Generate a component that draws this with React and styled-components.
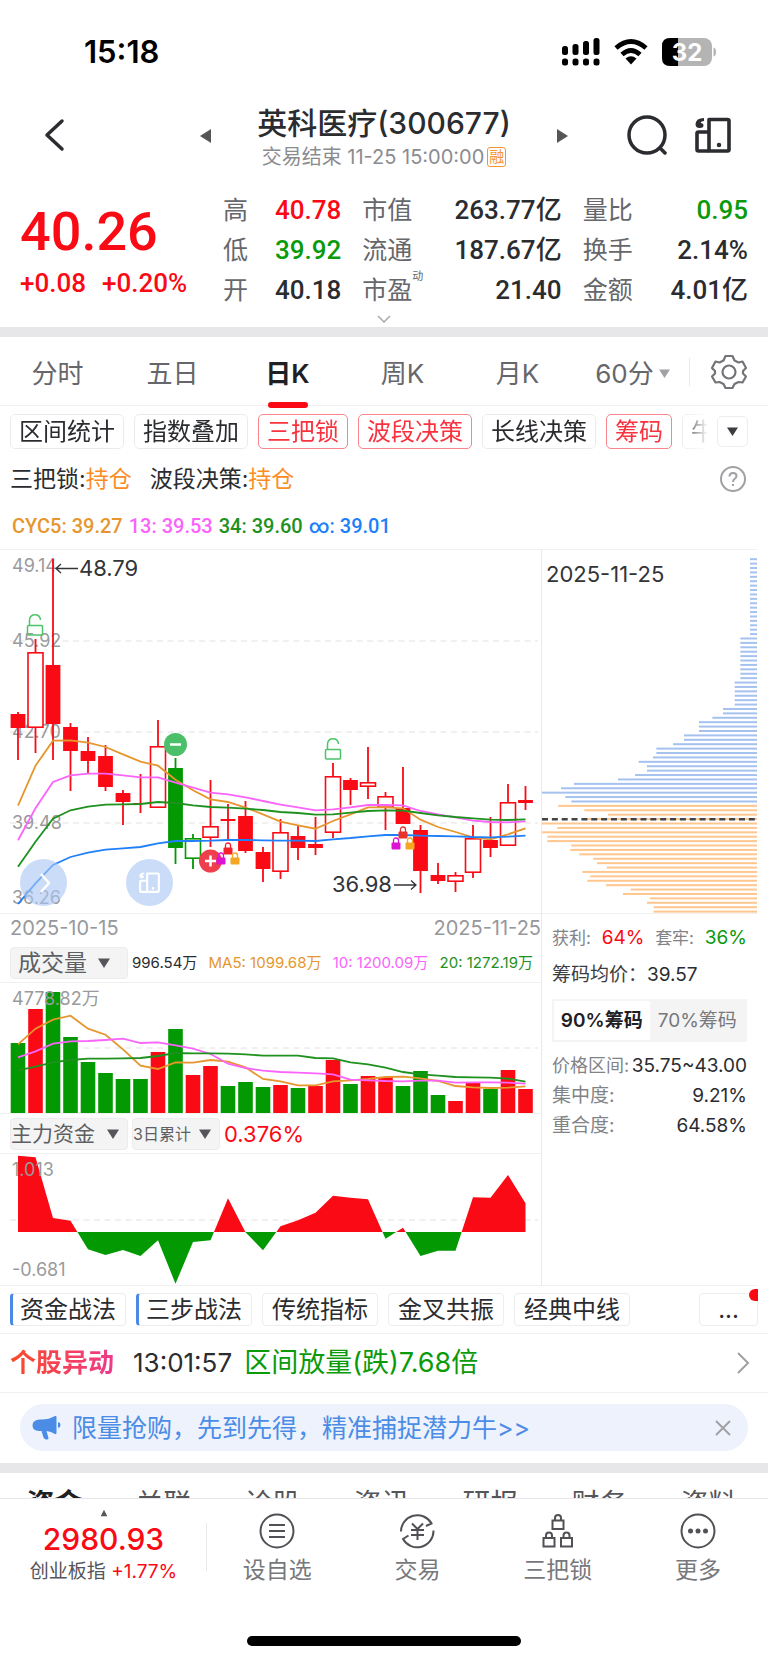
import { useState } from "react";
import styled, { createGlobalStyle, css } from "styled-components";

const RED = "#fa0a14";
const GREEN = "#0a9a0a";
const CANDLE_GREEN = "#029902";
const ORANGE = "#e6962e";
const PINK = "#fa64fa";
const MA_GREEN = "#1e911e";
const BLUE = "#2080fa";
const LINE = "#f0f0f1";

const GlobalStyle = createGlobalStyle`
    * {
        box-sizing: border-box;
    }
    body {
        margin: 0;
        background-color: #fff;
        color: #2b2c30;
        font-family: Inter, "Noto Sans CJK SC", sans-serif;
        font-size: 24px;
        line-height: 32px;
    }
    button, select {
        margin: 0;
        padding: 0;
        border: 0;
        background: none;
        color: inherit;
        font: inherit;
        cursor: pointer;
    }
    a {
        color: inherit;
        text-decoration: none;
    }
    svg {
        display: block;
        flex-shrink: 0;
    }
    dl, dd, dt, p, h1 {
        margin: 0;
        font-weight: 400;
    }
`

const Page = styled.div`
    width: 100%;
    overflow: hidden;
`

const digits = css`
    font-family: Roboto, "Noto Sans CJK SC", sans-serif;
    font-weight: 500;
`

/* ---------- header ---------- */

const StatusBar = styled.div`
    display: flex;
    align-items: center;
    justify-content: space-between;
    height: 100px;
    padding: 3px 52px 0 84px;
`

const Clock = styled.span`
    font-size: 31px;
    font-weight: 600;
    color: #000;
`

const StatusIcons = styled.div`
    display: flex;
    align-items: center;
    column-gap: 14px;
`

const NavBar = styled.header`
    display: grid;
    grid-template-columns: 200px 1fr 200px;
    align-items: center;
    height: 68px;
`

const NavSide = styled.div`
    display: flex;
    align-items: center;
    justify-content: ${({ $end }) => ($end ? "flex-end" : "flex-start")};
    column-gap: 28px;
    padding: ${({ $end }) => ($end ? "0 37px 2px 0" : "0 0 2px 44px")};
`

const NavCenter = styled.div`
    display: flex;
    align-items: center;
    justify-content: space-between;
`

const TitleBlock = styled.div`
    padding-top: 4px;
    text-align: center;
`

const Title = styled.h1`
    font-size: 30px;
    font-weight: 500;
    line-height: 38px;
`

const Subtitle = styled.p`
    display: flex;
    align-items: center;
    justify-content: center;
    column-gap: 3px;
    font-size: 20px;
    line-height: 30px;
    color: #8b8c90;
`

const Badge = styled.span`
    padding: 0 1px;
    border: 1px solid #f5952f;
    border-radius: 3px;
    font-size: 15px;
    line-height: 18px;
    color: #f5952f;
`

const Quote = styled.section`
    display: grid;
    grid-template-columns: 203px 1fr;
    padding: 22px 20px 0;
`

const Price = styled.p`
    ${digits}
    padding-top: 14px;
    font-size: 54px;
    line-height: 56px;
    color: ${RED};
`

const Change = styled.p`
    ${digits}
    display: flex;
    column-gap: 16px;
    padding-top: 7px;
    font-size: 26px;
    color: ${RED};
`

const QuoteGrid = styled.dl`
    display: grid;
    grid-template-columns: 118fr 199fr 165fr;
    column-gap: 21px;
`

const QuoteItem = styled.div`
    display: flex;
    justify-content: space-between;
    line-height: 40px;

    dt {
        color: #66676b;
        font-size: 25px;
    }
    dt sup {
        display: inline-block;
        height: 24px;
        font-size: 11px;
        line-height: 12px;
        vertical-align: top;
    }
    dd {
        ${digits}
        font-size: 26px;
        color: ${({ $color }) => $color || "inherit"};
    }
`

const ExpandButton = styled.button`
    display: flex;
    justify-content: center;
    align-items: center;
    width: 100%;
    height: 17px;
`

const Band = styled.div`
    height: 10px;
    background-color: #e7e7e9;
`

/* ---------- chart controls ---------- */

const Tabs = styled.nav`
    display: flex;
    align-items: center;
    height: 69px;
    padding-right: 78px;
    border-bottom: 1px solid ${LINE};
    position: relative;
`

const Tab = styled.button`
    position: relative;
    display: flex;
    align-items: center;
    justify-content: center;
    flex: 1;
    column-gap: 5px;
    height: 68px;
    padding-top: 5px;
    font-size: 26px;
    font-weight: ${({ $active }) => ($active ? 600 : 400)};
    color: ${({ $active }) => ($active ? "#1f2024" : "#66676b")};

    &::after {
        content: "";
        display: ${({ $active }) => ($active ? "block" : "none")};
        position: absolute;
        bottom: -3px;
        width: 40px;
        height: 6px;
        border-radius: 3px;
        background-color: ${RED};
    }
`

const SettingsButton = styled.button`
    position: absolute;
    right: 0;
    display: flex;
    align-items: center;
    justify-content: center;
    width: 79px;
    height: 28px;
    margin-top: 2px;
    border-left: 1px solid #e8e8ea;
`

const ChipRow = styled.div`
    display: flex;
    align-items: center;
    padding: 8px 20px 0 10px;
`

const ChipScroller = styled.div`
    display: flex;
    flex: 1;
    min-width: 0;
    column-gap: 10px;
    overflow: hidden;
    -webkit-mask-image: linear-gradient(to right, #000 96%, transparent 100%);
    mask-image: linear-gradient(to right, #000 96%, transparent 100%);
`

const Chip = styled.button`
    flex-shrink: 0;
    height: 35px;
    padding: 0 8px;
    border: 1px solid ${({ $on }) => ($on ? "#f9848c" : "#ebebed")};
    border-radius: 5px;
    font-size: 24px;
    line-height: 32px;
    color: ${({ $on }) => ($on ? "#f8333f" : "inherit")};
`

const ChipMore = styled.button`
    display: flex;
    align-items: center;
    justify-content: center;
    width: 31px;
    height: 31px;
    margin-left: 9px;
    border: 1px solid #ededef;
    border-radius: 5px;
`

const SignalRow = styled.div`
    display: flex;
    align-items: center;
    justify-content: space-between;
    height: 60px;
    padding: 0 22px 0 10px;
`

const Signals = styled.p`
    display: flex;
    column-gap: 18px;
    font-size: 23px;

    em {
        font-style: normal;
        color: #fb8c23;
    }
`

const CycRow = styled.p`
    ${digits}
    display: flex;
    align-items: center;
    column-gap: 6px;
    height: 40px;
    padding: 0 12px 6px;
    font-size: 20px;
`

const Colored = styled.span`
    color: ${({ $color }) => $color};
`

/* ---------- charts ---------- */

const ChartArea = styled.main`
    display: grid;
    grid-template-columns: minmax(0, 541fr) minmax(0, 216fr);
    margin-right: 11px;
    border-top: 1px solid ${LINE};
    border-bottom: 1px solid ${LINE};
`

const Charts = styled.div`
    min-width: 0;
`

const Side = styled.aside`
    border-left: 1px solid #e9e9eb;
`

const Plot = styled.svg`
    width: 100%;
    height: auto;
    border-bottom: ${({ $line }) => ($line ? `1px solid ${LINE}` : "0")};
`

const PlotText = styled.text`
    font-size: ${({ $big }) => ($big ? "22px" : "18px")};
    fill: ${({ $big }) => ($big ? "#333438" : "#9a9a9c")};
`

const CandleBox = styled.div`
    position: relative;
`

const Floating = styled.button`
    position: absolute;
    left: ${({ $left }) => $left};
    bottom: 8px;
    display: flex;
    align-items: center;
    justify-content: center;
    width: 47px;
    height: 47px;
    border-radius: 50%;
    background-color: rgba(170, 198, 243, 0.62);
`

const DateRow = styled.div`
    display: flex;
    justify-content: space-between;
    height: 29px;
    padding-left: 10px;
    font-size: 20px;
    line-height: 28px;
    color: #97989b;
`

const PanelHead = styled.div`
    display: flex;
    align-items: center;
    height: 40px;
    padding-left: 10px;
    border-bottom: 1px solid ${LINE};
`

const Picker = styled.div`
    position: relative;
    display: flex;
    align-items: center;
    width: ${({ $small }) => ($small ? "88px" : "118px")};
    height: 32px;
    margin-right: 4px;
    border: 1px solid #ececee;
    border-radius: 4px;
    background-color: #f4f4f5;

    select {
        appearance: none;
        width: 100%;
        height: 30px;
        padding-left: ${({ $indent }) => ($indent ? "7px" : "0")};
        font-size: ${({ $small, $indent }) => ($small ? "16px" : $indent ? "23px" : "21px")};
        line-height: 30px;
        color: #5e5f63;
        outline: none;
    }
    svg {
        position: absolute;
        right: ${({ $indent }) => ($indent ? "17px" : "8px")};
        pointer-events: none;
    }
`

const VolumeLegend = styled.p`
    display: flex;
    flex: 1;
    justify-content: space-between;
    padding-right: 8px;
    font-size: 15px;
    white-space: nowrap;
`

const FundValue = styled.span`
    font-size: 22px;
    color: ${RED};
`

const SideBody = styled.div`
    padding: 9px 10px 0;
`

const StatRow = styled.div`
    display: flex;
    align-items: center;
    justify-content: ${({ $start }) => ($start ? "flex-start" : "space-between")};
    height: ${({ $tall }) => ($tall ? "44px" : "30px")};
    font-size: 19px;
    white-space: nowrap;
`

const StatLabel = styled.span`
    font-size: ${({ $size }) => $size || 19}px;
    color: ${({ $dark }) => ($dark ? "#3c3d41" : "#828387")};
`

const Toggle = styled.div`
    display: flex;
    height: 43px;
    margin: 2px 0 9px;
    padding: 2px;
    background-color: #f4f4f5;
`

const ToggleItem = styled.button`
    flex: 1;
    background-color: ${({ $active }) => ($active ? "#fff" : "transparent")};
    font-size: 19px;
    font-weight: ${({ $active }) => ($active ? 600 : 400)};
    color: ${({ $active }) => ($active ? "#1f2024" : "#77787c")};
    white-space: nowrap;
`

/* ---------- below the charts ---------- */

const TacticRow = styled.div`
    display: flex;
    column-gap: 10px;
    height: 48px;
    padding: 7px 10px 0;
    border-bottom: 1px solid ${LINE};
`

const Tactic = styled.button`
    height: 33px;
    padding: 0 9px;
    border: 1px solid #ededef;
    border-left: ${({ $marked }) => ($marked ? "3px solid #4a8ae4" : "1px solid #ededef")};
    padding-left: ${({ $marked }) => ($marked ? "7px" : "9px")};
    border-radius: 4px;
    font-size: 24px;
    line-height: 30px;
`

const TacticMore = styled.button`
    position: relative;
    width: 59px;
    height: 33px;
    margin-left: auto;
    border: 1px solid #ededef;
    border-radius: 4px;
    overflow: visible;

    &::after {
        content: "";
        position: absolute;
        top: -5px;
        right: -1px;
        width: 9px;
        height: 12px;
        border-radius: 6px 0 0 6px;
        background-color: ${RED};
    }
`

const Alert = styled.a`
    display: flex;
    align-items: center;
    height: 59px;
    padding: 0 18px 0 10px;
    border-bottom: 1px solid ${LINE};
    font-size: 26px;

    svg {
        margin-left: auto;
    }
`

const AlertTag = styled.strong`
    margin-right: 19px;
    background-image: linear-gradient(to right, #fb4a26, #ee3a8c);
    background-clip: text;
    -webkit-background-clip: text;
    color: transparent;
    font-weight: 700;
`

const AlertText = styled.span`
    margin-left: 12px;
    font-size: 27px;
    color: ${GREEN};
`

const Banner = styled.div`
    display: flex;
    align-items: center;
    height: 47px;
    margin: 11px 20px 12px;
    padding: 0 17px 0 12px;
    border-radius: 24px;
    background-color: #edf2fc;
    font-size: 25px;
    color: #4a8ce6;

    a {
        flex: 1;
        margin-left: 11px;
    }
`

const CutTabs = styled.nav`
    display: flex;
    height: 25px;
    padding: 11px 5px 0 0;
    overflow: hidden;
`

const CutTab = styled.button`
    display: flex;
    flex: 1;
    justify-content: center;
    height: 40px;
    font-size: 28px;
    line-height: 40px;
    font-weight: ${({ $active }) => ($active ? 700 : 400)};
    color: ${({ $active }) => ($active ? "#1f2024" : "#55565a")};
`

const BottomBar = styled.footer`
    display: flex;
    height: 138px;
    border-top: 1px solid #e6e6e8;
`

const IndexBox = styled.div`
    position: relative;
    width: 207px;
    padding-top: 10px;
    text-align: center;

    svg {
        margin: 0 auto;
    }
    &::after {
        content: "";
        position: absolute;
        top: 24px;
        right: 0;
        height: 48px;
        border-right: 1px solid #e8e8ea;
    }
`

const IndexValue = styled.p`
    margin-top: 2px;
    font-size: 30px;
    font-weight: 500;
    line-height: 40px;
    color: ${RED};
`

const IndexName = styled.p`
    font-size: 19px;
    line-height: 26px;
    color: #55565a;
`

const BottomItem = styled.button`
    display: flex;
    flex: 1;
    flex-direction: column;
    align-items: center;
    height: 90px;
    padding-top: 14px;
    color: #77787c;
    font-size: 23px;
    row-gap: 5px;
`

const HomeIndicator = styled.div`
    width: 274px;
    height: 10px;
    margin: 0 auto 17px;
    border-radius: 5px;
    background-color: #000;
`

/* ---------- data ---------- */

const QUOTES = [
    ["高", "40.78", RED], ["市值", "263.77亿"], ["量比", "0.95", GREEN],
    ["低", "39.92", GREEN], ["流通", "187.67亿"], ["换手", "2.14%"],
    ["开", "40.18"], ["市盈", "21.40", null, "动"], ["金额", "4.01亿"],
]

const PERIODS = ["分时", "五日", "日K", "周K", "月K", "60分"]

const CHIPS = [
    ["区间统计"], ["指数叠加"], ["三把锁", true], ["波段决策", true],
    ["长线决策"], ["筹码", true], ["牛"],
]

// kind (f = filled, h = hollow, g = green), body top, body bottom, high, low
const CANDLES = [
    ["f", 164, 178, 162, 210], ["h", 102, 178, 89, 203], ["f", 115, 174, 9, 210],
    ["f", 177, 201, 173, 241], ["f", 201, 211, 187, 223], ["f", 206, 237, 195, 241],
    ["f", 243, 252, 240, 275], ["f", 253, 254, 224, 263], ["h", 196, 258, 170, 258],
    ["g", 218, 298, 208, 314], ["gh", 288, 309, 284, 319], ["h", 276, 288, 230, 297],
    ["f", 269, 271, 254, 289], ["f", 266, 301, 251, 303], ["f", 302, 319, 297, 332],
    ["h", 282, 322, 269, 329], ["f", 286, 298, 276, 310], ["f", 294, 298, 267, 305],
    ["h", 226, 283, 213, 288], ["f", 230, 240, 228, 255], ["h", 232, 237, 197, 249],
    ["h", 246, 258, 242, 280], ["f", 258, 274, 217, 274], ["f", 280, 321, 275, 343],
    ["f", 325, 331, 313, 334], ["h", 325, 332, 322, 342], ["h", 288, 323, 275, 328],
    ["f", 290, 298, 267, 307], ["h", 252, 296, 234, 296], ["f", 250, 253, 236, 260],
]

const CYC_LINES = [
    [ORANGE, [782, 662, 587, 586, 593, 606, 628, 650, 662, 704, 736, 763, 771, 788, 808, 830, 841, 851, 828, 808, 787, 787, 790, 824, 846, 861, 877, 883, 868, 850]],
    [PINK, [886, 790, 711, 691, 686, 686, 691, 697, 697, 713, 728, 743, 748, 757, 768, 779, 787, 796, 793, 787, 780, 780, 781, 798, 808, 817, 827, 831, 832, 829]],
    [MA_GREEN, [965, 890, 821, 796, 785, 779, 778, 777, 771, 774, 781, 786, 788, 791, 795, 801, 804, 809, 808, 803, 798, 796, 797, 804, 811, 816, 820, 824, 825, 823]],
    [BLUE, [1077, 1015, 960, 936, 923, 914, 910, 906, 895, 888, 888, 887, 885, 885, 886, 887, 887, 888, 883, 879, 874, 870, 870, 872, 873, 874, 876, 877, 875, 872]],
]

const VOLUMES = [
    400, -297, 247, 381, 457, 488, 506, 507, -426, 357, -495, -469, 527, 515, 531,
    -525, 534, -528, -449, 523, -497, -502, 527, 482, 556, -574, -517, 537, -479, -537,
]

const VOLUME_LINES = [
    [ORANGE, [403, 356, 329, 317, 356, 374, 418, 467, 477, 457, 458, 450, 455, 472, 507, 514, 526, 526, 514, 511, 507, 501, 500, 505, 513, 528, 532, 534, 533, 529]],
    [PINK, [442, 424, 401, 394, 393, 390, 386, 399, 397, 406, 416, 432, 461, 474, 482, 486, 488, 490, 493, 509, 511, 513, 514, 512, 512, 518, 517, 517, 518, 521]],
    [MA_GREEN, [481, 470, 457, 450, 446, 446, 445, 444, 438, 429, 430, 430, 431, 433, 437, 437, 437, 444, 445, 457, 463, 473, 486, 493, 497, 501, 502, 503, 506, 515]],
]

const FUNDS = [
    737, 742, 924, 932, 1018, 1035, 1020, 1038, 991, 1121, 996, 991, 865, 967, 1021,
    949, 931, 908, 857, 863, 868, 986, 953, 1038, 1022, 1022, 862, 863, 795, 880,
]

// [rows, left edge], from the top price down
const CHIP_ROWS = [
    [18, 660], [10, 631], [6, 614], [2, 579], [1, 547], [3, 507], [2, 462], [1, 429],
    [2, 379], [1, 369], [1, 326], [2, 351], [1, 315], [1, 264], [1, 132], [1, 93],
    [1, 36], [1, 106], [1, 124], [1, 85], [1, 163], [1, 234], [1, 158], [1, 36],
    [1, 82], [1, 36], [2, 52], [1, 124], [1, 121], [1, 148], [1, 190], [1, 201],
    [1, 230], [1, 157], [1, 181], [1, 172], [1, 228], [1, 302], [1, 279], [1, 360],
    [1, 351], [2, 371],
].flatMap(([rows, left]) => Array(rows).fill(left))

const FIRST_ORANGE_ROW = 56

const cx = (i) => 18 + i * 17.5
const toPoints = (values, offset) =>
    values.map((v, i) => `${cx(i)},${(v / 3 - offset).toFixed(1)}`).join(" ")

/* ---------- small drawings ---------- */

function Caret({ size = 12, color = "#55565a", up = false }) {
    return (
        <svg width={size} height={size} viewBox="0 0 12 12" aria-hidden="true">
            <path d={up ? "M6 1 11 11H1Z" : "M0 1.500H12L6 11Z"} fill={color} />
        </svg>
    )
}

function BoardIcon({ size, color, stroke = 3.6 }) {
    return (
        <svg width={size} height={size} viewBox="0 0 36 36" fill="none" stroke={color} strokeWidth={stroke} strokeLinejoin="round" aria-hidden="true">
            <path d="M14 2.500H32.500Q34 2.500 34 4V32.500Q34 34 32.500 34H14Z" />
            <path d="M14 15H3.500Q2 15 2 16.500V32.500Q2 34 3.500 34H14" />
            <path d="M0.500 7Q1 1 9 1V4Q6 4 5.500 6Q8.500 6 8.500 8.500Q8.500 11 4.500 11Q0.500 11 0.500 7Z" fill={color} stroke="none" />
            <circle cx="24" cy="28" r="1" strokeWidth="2.500" />
        </svg>
    )
}

function OpenLock({ x, y }) {
    return (
        <g transform={`translate(${x - 8} ${y})`} fill="none" stroke="#4cc468" strokeWidth="1.500">
            <rect x="0.500" y="11.500" width="15" height="9.500" rx="1" />
            <path d="M2.500 11.500V6Q3 0.800 8 0.800Q13 0.800 13.500 6" />
        </g>
    )
}

function SmallLock({ x, y, color }) {
    return (
        <g transform={`translate(${x - 4.5} ${y})`}>
            <rect y="5.500" width="9" height="7" rx="1" fill={color} />
            <path d="M2 6V3.500Q2 1 4.500 1Q7 1 7 3.500V6" fill="none" stroke={color} strokeWidth="1.300" />
        </g>
    )
}

function StatusGlyphs() {
    return (
        <StatusIcons>
            <svg width="38" height="28" viewBox="0 0 38 28" aria-label="signal">
                <rect x="0" y="8" width="6" height="9" rx="2.500" />
                <rect x="10.500" y="6" width="6" height="11" rx="2.500" />
                <rect x="21" y="3" width="6" height="14" rx="2.500" />
                <rect x="31.500" y="0" width="6" height="17" rx="2.500" />
                {[0, 10.5, 21, 31.5].map((x) => (
                    <rect key={x} x={x} y="20.500" width="6" height="7" rx="2.500" />
                ))}
            </svg>
            <svg width="34" height="26" viewBox="0 0 34 26" fill="none" stroke="#000" strokeWidth="4.800" aria-label="wifi">
                <path d="M2 9Q17 -4 32 9" />
                <path d="M8 15.500Q17 7.500 26 15.500" />
                <path d="M11.500 19.500Q17 15 22.500 19.500L17 25.500Z" fill="#000" stroke="none" />
            </svg>
            <svg width="54" height="28" viewBox="0 0 54 28" aria-label="battery 32">
                <rect width="50" height="28" rx="8" fill="#b4b4b4" />
                <path d="M8 0H16V28H8Q0 28 0 20V8Q0 0 8 0Z" />
                <path d="M51.500 9.500Q54 10 54 14Q54 18 51.500 18.500Z" fill="#b4b4b4" />
                <text x="25" y="22.500" textAnchor="middle" fontSize="24" fontWeight="700" fill="#fff">32</text>
            </svg>
        </StatusIcons>
    )
}

/* ---------- charts ---------- */

function Candle({ data, index }) {
    const [kind, top, bottom, high, low] = data
    const color = kind[0] === "g" ? CANDLE_GREEN : RED
    const hollow = kind.includes("h")
    const x = cx(index)
    return (
        <g>
            <path d={`M${x} ${high}V${top}M${x} ${bottom}V${low}`} stroke={color} strokeWidth="1.800" />
            {hollow
                ? <rect x={x - 7.5} y={top + 0.8} width="15" height={bottom - top - 1.6} fill="#fff" stroke={color} strokeWidth="1.600" />
                : <rect x={x - 7.4} y={top} width="14.800" height={bottom - top} fill={color} />}
        </g>
    )
}

function Lines({ lines, offset }) {
    return lines.map(([color, values]) => (
        <polyline key={color} points={toPoints(values, offset)} fill="none" stroke={color} strokeWidth="1.800" />
    ))
}

function Grid({ rows }) {
    return rows.map((y) => (
        <path key={y} d={`M10 ${y}H538`} stroke="#ececec" strokeWidth="1.500" strokeDasharray="6 4.500" />
    ))
}

function CandleChart() {
    return (
        <CandleBox>
            <Plot viewBox="0 0 541 363" $line>
                <Grid rows={[91, 182, 273]} />
                <PlotText x="12" y="22">49.14</PlotText>
                <PlotText x="12" y="97">45.92</PlotText>
                <PlotText x="12" y="188">42.70</PlotText>
                <PlotText x="12" y="279">39.48</PlotText>
                <PlotText x="12" y="354">36.26</PlotText>
                {CANDLES.map((data, i) => <Candle key={i} data={data} index={i} />)}
                <Lines lines={CYC_LINES} offset={5} />
                <OpenLock x={35} y={64} />
                <OpenLock x={333} y={188} />
                <circle cx="175.500" cy="194.500" r="11.500" fill="#4cc068" />
                <path d="M170 194.500H181" stroke="#fff" strokeWidth="2.500" />
                <circle cx="210.500" cy="311" r="11.500" fill="#ee404c" />
                <path d="M205 311H216M210.500 305.500V316.500" stroke="#fff" strokeWidth="2.500" />
                <SmallLock x={228} y={292} color="#f6202c" />
                <SmallLock x={221} y={302} color="#dc14d2" />
                <SmallLock x={235} y={302} color="#f5a623" />
                <SmallLock x={403} y={276} color="#e8322c" />
                <SmallLock x={396} y={287} color="#dc14d2" />
                <SmallLock x={410} y={287} color="#f5a623" />
                <path d="M78 18.500H56M61 14 56 18.500 61 23" fill="none" stroke="#333438" strokeWidth="1.300" />
                <PlotText $big x="79" y="26">48.79</PlotText>
                <PlotText $big x="332" y="342">36.98</PlotText>
                <path d="M394 335H416M411 330.500 416 335 411 339.500" fill="none" stroke="#333438" strokeWidth="1.300" />
            </Plot>
            <Floating $left="20px" aria-label="展开">
                <svg width="20" height="20" viewBox="0 0 20 20" fill="none" stroke="#fff" strokeWidth="2.500">
                    <path d="M7 1 15 10 7 19" />
                </svg>
            </Floating>
            <Floating $left="126px" aria-label="横屏">
                <BoardIcon size={21} color="#fff" />
            </Floating>
        </CandleBox>
    )
}

function VolumeChart() {
    return (
        <Plot viewBox="0 0 541 130" $line>
            <Grid rows={[65]} />
            {VOLUMES.map((v, i) => {
                const top = Math.round(Math.abs(v) / 3 - 73)
                return <rect key={i} x={cx(i) - 7.3} y={top} width="14.600" height={130 - top} fill={v < 0 ? RED : CANDLE_GREEN} />
            })}
            <Lines lines={VOLUME_LINES} offset={73} />
            <PlotText x="12" y="22">4778.82万</PlotText>
        </Plot>
    )
}

function FundChart() {
    const area = `${cx(0)},78 ${toPoints(FUNDS, 244)} ${cx(29)},78`
    return (
        <Plot viewBox="0 0 541 131">
            <defs>
                <clipPath id="inflow"><rect width="541" height="78" /></clipPath>
                <clipPath id="outflow"><rect y="78" width="541" height="53" /></clipPath>
            </defs>
            <Grid rows={[66]} />
            <polygon points={area} fill={RED} clipPath="url(#inflow)" />
            <polygon points={area} fill={CANDLE_GREEN} clipPath="url(#outflow)" />
            <PlotText x="12" y="22">1.013</PlotText>
            <PlotText x="12" y="122">-0.681</PlotText>
        </Plot>
    )
}

function ChipDistribution() {
    return (
        <Plot viewBox="0 0 215 363" $line>
            {CHIP_ROWS.map((left, i) => {
                const x = (left - 36) / 3
                return (
                    <rect
                        key={i}
                        x={x}
                        y={8.2 + i * 4.405}
                        width={215 - x}
                        height="2"
                        fill={i < FIRST_ORANGE_ROW ? "#a5c2ef" : "#ffc78f"}
                    />
                )
            })}
            <path d="M0 269.200H215" stroke="#444548" strokeWidth="2.500" strokeDasharray="6 3.850" />
            <PlotText $big x="4" y="32">2025-11-25</PlotText>
        </Plot>
    )
}

function ChipStats() {
    const [range, setRange] = useState(90)
    return (
        <SideBody>
            <StatRow>
                <StatLabel $size={17}>获利:</StatLabel>
                <Colored $color={RED}>64%</Colored>
                <StatLabel $size={17}>套牢:</StatLabel>
                <Colored $color={GREEN}>36%</Colored>
            </StatRow>
            <StatRow $tall $start>
                <StatLabel $dark>筹码均价：</StatLabel>
                <span>39.57</span>
            </StatRow>
            <Toggle>
                <ToggleItem $active={range === 90} onClick={() => setRange(90)}>90%筹码</ToggleItem>
                <ToggleItem $active={range === 70} onClick={() => setRange(70)}>70%筹码</ToggleItem>
            </Toggle>
            <StatRow>
                <StatLabel $size={18}>价格区间:</StatLabel>
                <span>35.75~43.00</span>
            </StatRow>
            <StatRow>
                <StatLabel>集中度:</StatLabel>
                <span>9.21%</span>
            </StatRow>
            <StatRow>
                <StatLabel>重合度:</StatLabel>
                <span>64.58%</span>
            </StatRow>
        </SideBody>
    )
}

/* ---------- bottom bar icons ---------- */

const iconProps = {
    width: 36,
    height: 36,
    viewBox: "0 0 36 36",
    fill: "none",
    stroke: "#505156",
    strokeWidth: 2,
    "aria-hidden": true,
}

function Padlock({ x, y }) {
    return (
        <g transform={`translate(${x} ${y})`}>
            <rect x="1" y="6.500" width="11" height="8.500" />
            <path d="M3.500 6.500V4Q3.500 1 6.500 1Q9.500 1 9.500 4V6.500" />
        </g>
    )
}

const BOTTOM_ITEMS = [
    ["设自选", (
        <svg {...iconProps}>
            <circle cx="18" cy="18" r="16.500" />
            <path d="M10 12H26M10 18H26M10 24H26" />
        </svg>
    )],
    ["交易", (
        <svg {...iconProps}>
            <path d="M2 18.500A16.300 16.300 0 0 1 32.500 10.500L27 13M34.500 17.500A16.300 16.300 0 0 1 4 26L9.500 22.500" />
            <path d="M13 10.500 18.500 16 24 10.500M18.500 16V27M12 17H25M12 22H25" />
        </svg>
    )],
    ["三把锁", (
        <svg {...iconProps}>
            <Padlock x={11.5} y={1} />
            <Padlock x={2.5} y={18.5} />
            <Padlock x={20} y={18.5} />
        </svg>
    )],
    ["更多", (
        <svg {...iconProps}>
            <circle cx="18" cy="18" r="16.500" />
            <g fill="#505156" stroke="none">
                <circle cx="10.500" cy="18" r="2.500" />
                <circle cx="18" cy="18" r="2.500" />
                <circle cx="25.500" cy="18" r="2.500" />
            </g>
        </svg>
    )],
]

function App() {
    const [period, setPeriod] = useState("日K")

    return (
        <Page>
            <GlobalStyle />
            <StatusBar>
                <Clock>15:18</Clock>
                <StatusGlyphs />
            </StatusBar>

            <NavBar>
                <NavSide>
                    <button aria-label="返回">
                        <svg width="22" height="34" viewBox="0 0 22 34" fill="none" stroke="#2b2c30" strokeWidth="3.500" strokeLinecap="round" strokeLinejoin="round">
                            <path d="M18 3 3 17 18 31" />
                        </svg>
                    </button>
                </NavSide>
                <NavCenter>
                    <button aria-label="上一只">
                        <svg width="11" height="14" viewBox="0 0 11 14"><path d="M11 0V14L0 7Z" fill="#55565a" /></svg>
                    </button>
                    <TitleBlock>
                        <Title>英科医疗(300677)</Title>
                        <Subtitle>交易结束 11-25 15:00:00<Badge>融</Badge></Subtitle>
                    </TitleBlock>
                    <button aria-label="下一只">
                        <svg width="11" height="14" viewBox="0 0 11 14"><path d="M0 0V14L11 7Z" fill="#55565a" /></svg>
                    </button>
                </NavCenter>
                <NavSide $end>
                    <button aria-label="搜索">
                        <svg width="40" height="40" viewBox="0 0 40 40" fill="none" stroke="#2b2c30" strokeWidth="3.500" strokeLinecap="round">
                            <circle cx="20" cy="20" r="18" />
                            <path d="M33 33 38 38" />
                        </svg>
                    </button>
                    <button aria-label="横屏">
                        <BoardIcon size={36} color="#2b2c30" />
                    </button>
                </NavSide>
            </NavBar>

            <Quote>
                <div>
                    <Price>40.26</Price>
                    <Change><span>+0.08</span><span>+0.20%</span></Change>
                </div>
                <QuoteGrid>
                    {QUOTES.map(([label, value, color, note]) => (
                        <QuoteItem key={label} $color={color}>
                            <dt>{label}{note && <sup>{note}</sup>}</dt>
                            <dd>{value}</dd>
                        </QuoteItem>
                    ))}
                </QuoteGrid>
            </Quote>
            <ExpandButton aria-label="展开行情">
                <svg width="14" height="8" viewBox="0 0 14 8" fill="none" stroke="#a9aaad" strokeWidth="1.500"><path d="M1 1 7 7 13 1" /></svg>
            </ExpandButton>
            <Band />

            <Tabs>
                {PERIODS.map((name) => (
                    <Tab key={name} $active={name === period} onClick={() => setPeriod(name)}>
                        {name}
                        {name === "60分" && <Caret size={11} color="#a0a1a4" />}
                    </Tab>
                ))}
                <SettingsButton aria-label="设置">
                    <svg width="36" height="36" viewBox="0 0 36 36" fill="none" stroke="#737478" strokeWidth="2.200" strokeLinejoin="round">
                        <path d="M14.500 2H21.500L23.500 6.500L27.500 8.500L31.500 7.500L35 14L32 17V19.500L35 22.500L31.500 28.500L27.500 28L23.500 30L21.500 34H14.500L12.500 30L8.500 28L4.500 28.500L1 22.500L4 19.500V17L1 14L4.500 7.500L8.500 8.500L12.500 6.500Z" />
                        <circle cx="18" cy="18" r="6.500" />
                    </svg>
                </SettingsButton>
            </Tabs>

            <ChipRow>
                <ChipScroller>
                    {CHIPS.map(([name, on]) => <Chip key={name} $on={on}>{name}</Chip>)}
                </ChipScroller>
                <ChipMore aria-label="更多指标"><Caret size={11} color="#3c3d41" /></ChipMore>
            </ChipRow>
            <SignalRow>
                <Signals>
                    <span>三把锁:<em>持仓</em></span>
                    <span>波段决策:<em>持仓</em></span>
                </Signals>
                <button aria-label="帮助">
                    <svg width="26" height="26" viewBox="0 0 26 26" fill="none" stroke="#a0a1a4" strokeWidth="2">
                        <circle cx="13" cy="13" r="12" />
                        <path d="M9.500 10.500Q9.500 7 13 7Q16.500 7 16.500 10Q16.500 11.500 14.500 13Q13 14 13 16M13 18V20" />
                    </svg>
                </button>
            </SignalRow>
            <CycRow>
                <Colored $color={ORANGE}>CYC5: 39.27</Colored>
                <Colored $color={PINK}>13: 39.53</Colored>
                <Colored $color={MA_GREEN}>34: 39.60</Colored>
                <Colored $color={BLUE}>∞: 39.01</Colored>
            </CycRow>

            <ChartArea>
                <Charts>
                    <CandleChart />
                    <DateRow><span>2025-10-15</span><span>2025-11-25</span></DateRow>
                    <PanelHead>
                        <Picker $indent>
                            <select aria-label="副图指标"><option>成交量</option></select>
                            <Caret />
                        </Picker>
                        <VolumeLegend>
                            <span>996.54万</span>
                            <Colored $color={ORANGE}>MA5: 1099.68万</Colored>
                            <Colored $color={PINK}>10: 1200.09万</Colored>
                            <Colored $color={MA_GREEN}>20: 1272.19万</Colored>
                        </VolumeLegend>
                    </PanelHead>
                    <VolumeChart />
                    <PanelHead>
                        <Picker>
                            <select aria-label="资金指标"><option>主力资金</option></select>
                            <Caret />
                        </Picker>
                        <Picker $small>
                            <select aria-label="累计周期"><option>3日累计</option></select>
                            <Caret />
                        </Picker>
                        <FundValue>0.376%</FundValue>
                    </PanelHead>
                    <FundChart />
                </Charts>
                <Side>
                    <ChipDistribution />
                    <ChipStats />
                </Side>
            </ChartArea>

            <TacticRow>
                <Tactic $marked>资金战法</Tactic>
                <Tactic $marked>三步战法</Tactic>
                <Tactic>传统指标</Tactic>
                <Tactic>金叉共振</Tactic>
                <Tactic>经典中线</Tactic>
                <TacticMore>...</TacticMore>
            </TacticRow>

            <Alert href="#alert">
                <AlertTag>个股异动</AlertTag>
                <span>13:01:57</span>
                <AlertText>区间放量(跌)7.68倍</AlertText>
                <svg width="14" height="22" viewBox="0 0 14 22" fill="none" stroke="#a0a1a4" strokeWidth="2"><path d="M2 1 12 11 2 21" /></svg>
            </Alert>

            <Banner>
                <svg width="29" height="26" viewBox="0 0 29 26" fill="#4a8ce6" aria-hidden="true">
                    <path d="M8 4.500Q16 5 23 1Q24.500 0.500 24.500 2V18Q24.500 19.500 23 19Q19 16.500 14.500 16L16.500 23Q16.500 25 14 24.500Q12 24 11.500 22.500L9.500 16H7Q0.500 15.500 0.500 10.500Q0.500 5 8 4.500Z" />
                    <path d="M26 7Q28.500 7.500 28.500 10Q28.500 12.500 26 13Z" />
                </svg>
                <a href="#promo">限量抢购，先到先得，精准捕捉潜力牛&gt;&gt;</a>
                <button aria-label="关闭">
                    <svg width="16" height="16" viewBox="0 0 16 16" stroke="#a0a1a4" strokeWidth="2"><path d="M1 1 15 15M15 1 1 15" /></svg>
                </button>
            </Banner>
            <Band />

            <CutTabs>
                {["资金", "关联", "诊股", "资讯", "研报", "财务", "资料"].map((name, i) => (
                    <CutTab key={name} $active={i === 0}>{name}</CutTab>
                ))}
            </CutTabs>

            <BottomBar>
                <IndexBox>
                    <Caret size={8} up />
                    <IndexValue>2980.93</IndexValue>
                    <IndexName>创业板指 <Colored $color={RED}>+1.77%</Colored></IndexName>
                </IndexBox>
                {BOTTOM_ITEMS.map(([name, icon]) => (
                    <BottomItem key={name}>{icon}{name}</BottomItem>
                ))}
            </BottomBar>
            <HomeIndicator />
        </Page>
    )
}

export default App;
